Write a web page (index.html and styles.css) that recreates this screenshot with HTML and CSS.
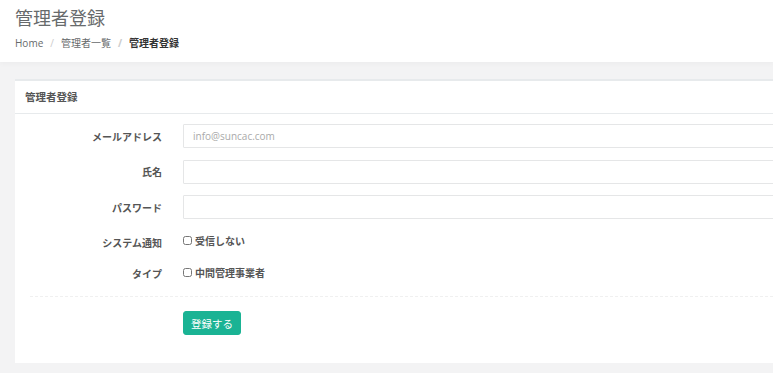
FILE: index.html
```html
<!DOCTYPE html>
<html lang="ja">
<head>
    <meta charset="UTF-8">
    <meta name="viewport" content="width=device-width, initial-scale=1.0">
    <title>管理者登録</title>
    <link rel="stylesheet" href="styles.css">
</head>
<body>
    <div class="page-heading">
        <h2>管理者登録</h2>
        <ol class="breadcrumb">
            <li><a href="#">Home</a></li>
            <li><a href="#">管理者一覧</a></li>
            <li class="active">管理者登録</li>
        </ol>
    </div>

    <div class="wrapper-content">
        <div class="ibox">
            <div class="ibox-title">管理者登録</div>
            <div class="ibox-content">
                <form class="form-horizontal">
                    <label class="control-label" for="email">メールアドレス</label>
                    <input type="text" id="email" class="form-control" placeholder="info@suncac.com">

                    <label class="control-label" for="name">氏名</label>
                    <input type="text" id="name" class="form-control">

                    <label class="control-label" for="password">パスワード</label>
                    <input type="password" id="password" class="form-control">

                    <label class="control-label check-label">システム通知</label>
                    <label class="check"><input type="checkbox"> 受信しない</label>

                    <label class="control-label check-label">タイプ</label>
                    <label class="check"><input type="checkbox"> 中間管理事業者</label>
                </form>
                <div class="hr-line-dashed"></div>
                <div class="form-actions">
                    <button class="btn-primary" type="submit">登録する</button>
                </div>
            </div>
        </div>
    </div>
</body>
</html>
```

FILE: styles.css
```css
html, body {
    margin: 0;
    height: 100%;
}
body {
    font-family: "Open Sans", "Noto Sans CJK JP", sans-serif;
    font-size: 10px;
    color: #676a6c;
    background-color: #f3f3f4;
    overflow: hidden;
}
.page-heading {
    background: white;
    padding: 8px 15px 12px;
    box-shadow: 0 2px 5px rgba(0, 0, 0, 0.03);
    position: relative;
}
.page-heading h2 {
    margin: 0;
    font-size: 18px;
    font-weight: 400;
    line-height: 20px;
    color: #676a6c;
}
.breadcrumb {
    list-style: none;
    margin: 8px 0 0;
    padding: 0;
    display: flex;
    font-size: 10px;
    line-height: 14px;
}
.breadcrumb li + li::before {
    content: "/";
    color: #ccc;
    padding: 0 7px;
}
.breadcrumb a {
    color: #676a6c;
    text-decoration: none;
}
.breadcrumb .active {
    font-weight: 700;
    color: #333;
}
.wrapper-content {
    padding: 17px 0 0 15px;
}
.ibox {
    background: white;
    border-top: 2px solid #e7eaec;
    margin-right: -30px;
}
.ibox-title {
    padding: 10px 10px;
    line-height: 12px;
    font-size: 10.5px;
    font-weight: 700;
    color: #555;
    border-bottom: 1px solid #e7eaec;
}
.ibox-content {
    padding: 10px 15px 28px;
}
.form-horizontal {
    display: grid;
    grid-template-columns: 132px 1fr;
    column-gap: 21px;
    row-gap: 11.5px;
}
.control-label {
    text-align: right;
    align-self: center;
    font-weight: 700;
    color: #555;
}
.check-label {
    padding-top: 3px;
}
.form-control {
    height: 24px;
    box-sizing: border-box;
    border: 1px solid #e5e6e7;
    border-radius: 1px;
    padding: 0 9px;
    font-family: inherit;
    font-size: 10px;
    color: #555;
}
.form-control::placeholder {
    color: #aaa;
}
.check {
    display: flex;
    align-items: center;
    height: 20px;
    font-weight: 700;
    color: #555;
}
.check input {
    width: 9px;
    height: 9px;
    margin: 0 3px 0 0;
}
.hr-line-dashed {
    border-top: 1px dashed #f0f0f0;
    margin: 14px 0 14px;
}
.form-actions {
    padding-left: 153px;
}
.btn-primary {
    height: 24px;
    padding: 0 7px;
    background-color: #1ab394;
    border: 1px solid #1ab394;
    border-radius: 3px;
    color: white;
    font-family: inherit;
    font-size: 10.5px;
    cursor: pointer;
}
```
